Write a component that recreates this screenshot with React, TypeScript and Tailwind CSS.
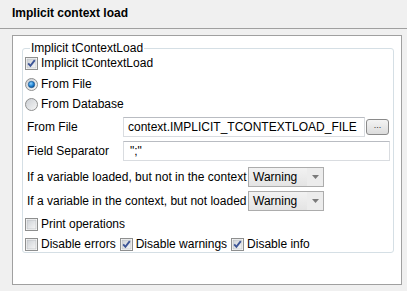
import React from 'react';

function CheckBox({ checked }: { checked?: boolean }) {
  return (
    <svg width="13" height="13" viewBox="0 0 13 13" className="shrink-0">
      <defs>
        <linearGradient id="cbg" x1="0" y1="0" x2="1" y2="1">
          <stop offset="0" stopColor="#cdd1d6" />
          <stop offset="1" stopColor="#f7f7f7" />
        </linearGradient>
      </defs>
      <rect x="0.5" y="0.5" width="12" height="12" fill="#fff" stroke="#8e8f8f" />
      <rect x="2" y="2" width="9" height="9" fill="url(#cbg)" stroke="#b5b8bd" strokeWidth="0.6" />
      {checked && (
        <path d="M3.2 6.4 L5.4 8.8 L9.8 3.2" fill="none" stroke="#3d5597" strokeWidth="1.9" />
      )}
    </svg>
  );
}

function Radio({ checked }: { checked?: boolean }) {
  return (
    <svg width="13" height="13" viewBox="0 0 13 13" className="shrink-0">
      <defs>
        <linearGradient id="rbg" x1="0" y1="0" x2="1" y2="1">
          <stop offset="0" stopColor="#c9cdd2" />
          <stop offset="1" stopColor="#f8f8f8" />
        </linearGradient>
        <radialGradient id="rdot" cx="0.4" cy="0.35" r="0.7">
          <stop offset="0" stopColor="#8fd3ff" />
          <stop offset="0.6" stopColor="#1d7fcf" />
          <stop offset="1" stopColor="#0c4a8a" />
        </radialGradient>
      </defs>
      <circle cx="6.5" cy="6.5" r="6" fill="url(#rbg)" stroke="#8e8f8f" />
      {checked && <circle cx="6.5" cy="6.5" r="3.2" fill="url(#rdot)" stroke="#174f86" strokeWidth="0.6" />}
    </svg>
  );
}

function Check({ label, checked }: { label: string; checked?: boolean }) {
  return (
    <div className="flex items-center gap-[3px]">
      <CheckBox checked={checked} />
      <span>{label}</span>
    </div>
  );
}

function Combo() {
  return (
    <div className="flex h-[20px] w-[76px] items-center border border-[#acacac] bg-gradient-to-b from-[#f2f2f2] to-[#e4e4e4]">
      <span className="flex-1 pl-[4px]">Warning</span>
      <div className="flex h-full w-[16px] items-center justify-center bg-[#ececec]">
        <svg width="7" height="4" viewBox="0 0 7 4">
          <path d="M0 0 L7 0 L3.5 4 Z" fill="#7a7a7a" />
        </svg>
      </div>
    </div>
  );
}

export default function App() {
  return (
    <div className="h-[291px] w-[407px] overflow-hidden bg-[#f0f0f0] font-['Liberation_Sans',sans-serif] text-[12px] leading-[14px] text-black">
      {/* titre */}
      <div className="h-[28px] pl-[12px] pt-[6px] font-bold">Implicit context load</div>
      <div className="h-px bg-[#a0a0a0]" />

      <div className="pl-[12px] pr-[5px] pt-[6px]">
        <div className="h-[250px] border border-[#a0a0a0] bg-white pl-[9px] pr-[7px] pt-[5px]">
          <fieldset className="rounded-[3px] border border-[#d5dfe5] px-[2px] pb-px">
            <legend className="ml-[5px] px-px leading-[15px]">Implicit tContextLoad</legend>

            <div className="flex h-[14px] items-center">
              <Check label="Implicit tContextLoad" checked />
            </div>

            <div className="mt-[7px] flex h-[14px] items-center gap-[3px]">
              <Radio checked />
              <span>From File</span>
            </div>
            <div className="mt-[6px] flex h-[14px] items-center gap-[3px]">
              <Radio />
              <span>From Database</span>
            </div>

            <div className="mt-[6px] flex h-[20px] items-center">
              <span className="w-[98px] pl-[2px]">From File</span>
              <div className="flex h-[20px] w-[242px] items-center border border-[#d9dce0] border-t-[#b9bcc2] px-[4px]">
                context.IMPLICIT_TCONTEXTLOAD_FILE
              </div>
              <button className="ml-[1px] flex h-[16px] w-[23px] items-center justify-center rounded-[3px] border border-[#8a8a8a] bg-gradient-to-b from-[#f4f4f4] to-[#dcdcdc] pb-[3px] text-[9px] leading-none text-[#333]">
                ...
              </button>
            </div>

            <div className="mt-[4px] flex h-[20px] items-center">
              <span className="w-[98px] pl-[2px]">Field Separator</span>
              <div className="flex h-[20px] w-[267px] items-center border border-[#d9dce0] border-t-[#b9bcc2] px-[6px]">
                ";"
              </div>
            </div>

            <div className="mt-[6px] flex h-[20px] items-center">
              <span className="w-[223px] pl-[2px]">If a variable loaded, but not in the context</span>
              <Combo />
            </div>
            <div className="mt-[4px] flex h-[20px] items-center">
              <span className="w-[223px] pl-[2px]">If a variable in the context, but not loaded</span>
              <Combo />
            </div>

            <div className="mt-[6px] flex h-[14px] items-center">
              <Check label="Print operations" />
            </div>
            <div className="mt-[6px] flex h-[14px] items-center gap-[4px]">
              <Check label="Disable errors" />
              <Check label="Disable warnings" checked />
              <Check label="Disable info" checked />
            </div>
          </fieldset>
        </div>
      </div>
    </div>
  );
}
